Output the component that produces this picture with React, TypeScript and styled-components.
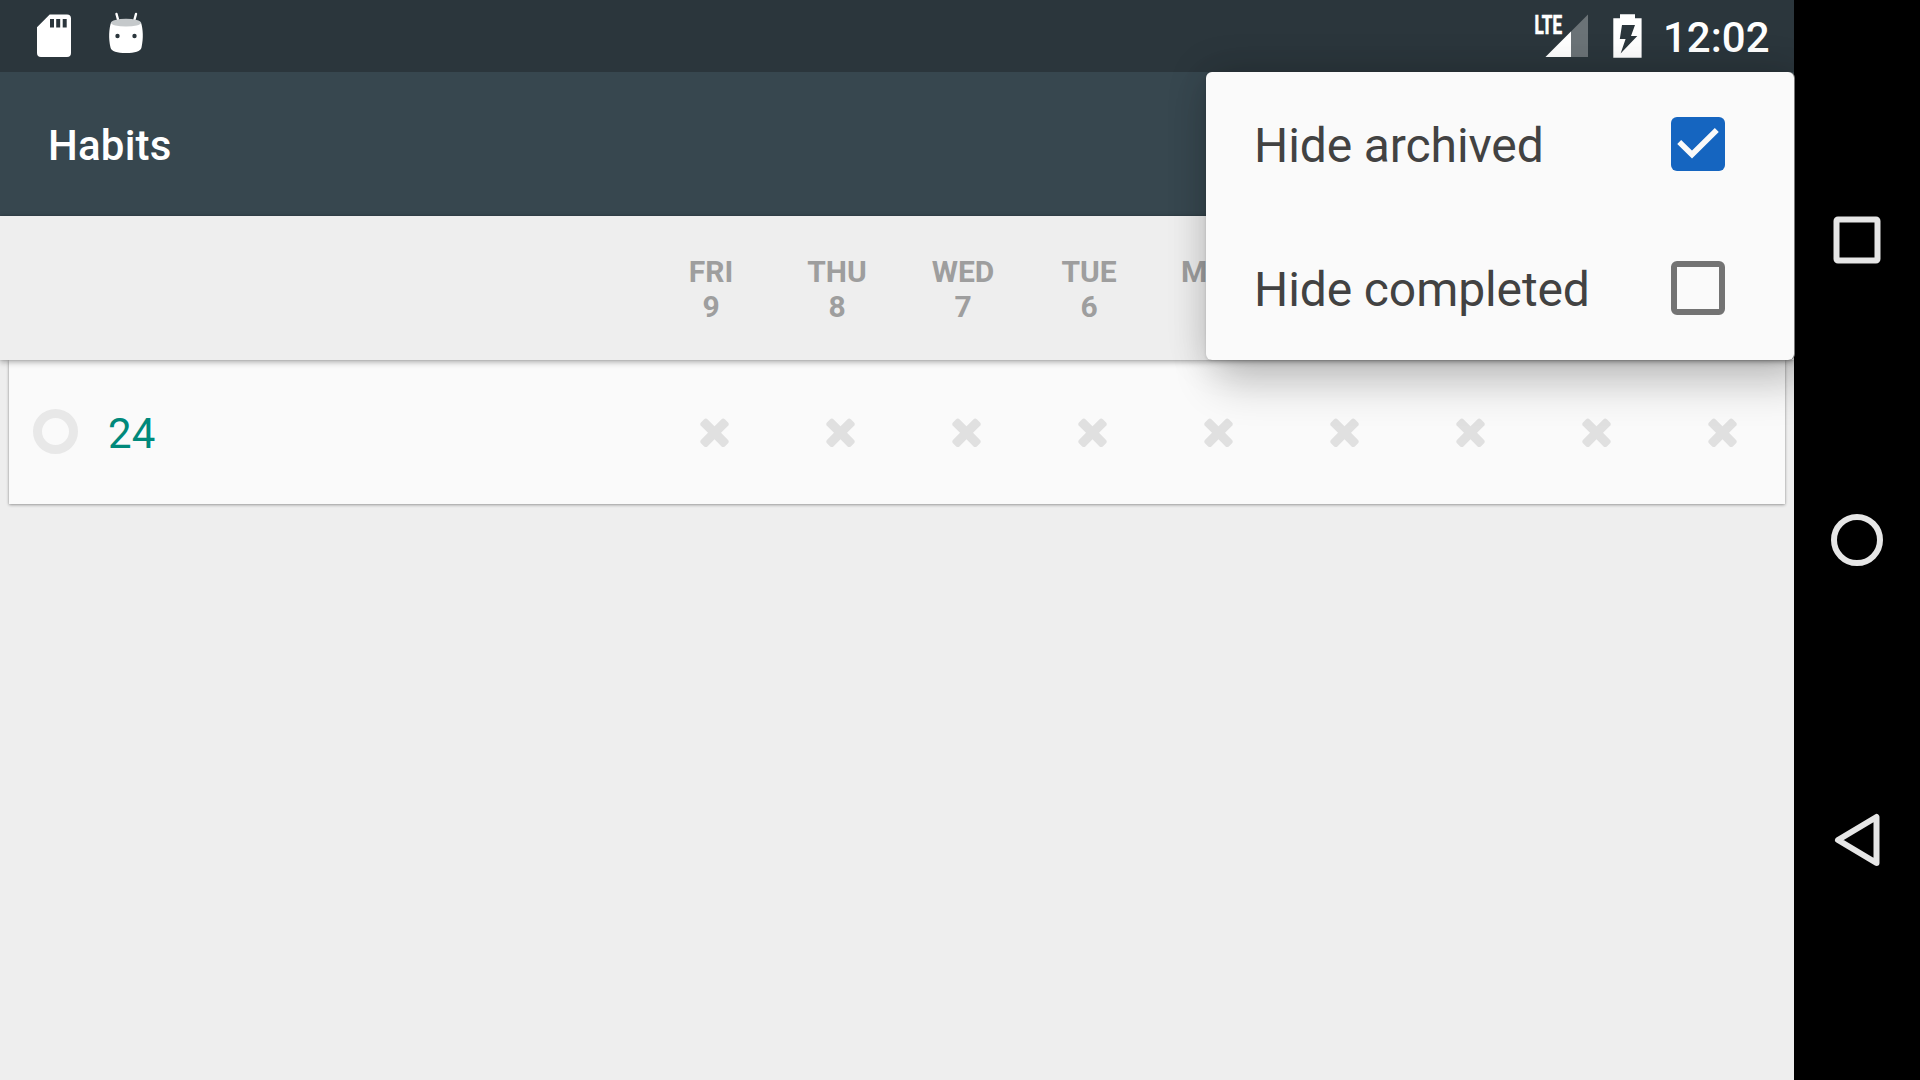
import React, { useState } from "react";
import styled, { createGlobalStyle } from "styled-components";

const GlobalStyle = createGlobalStyle`
  body {
    margin: 0;
    background: #000;
    font-family: Roboto, "Noto Sans", sans-serif;
  }
`;

const Device = styled.div`
  display: flex;
  width: 1920px;
  height: 1080px;
  background: #000;
  overflow: hidden;
`;

const Screen = styled.div`
  position: relative;
  display: flex;
  flex-direction: column;
  width: 1794px;
  height: 1080px;
  background: #eeeeee;
`;

const StatusBar = styled.header`
  display: flex;
  justify-content: space-between;
  height: 72px;
  background: #2b363c;
`;

const StatusGroup = styled.div`
  display: flex;
  align-items: center;
`;

const StatusIcon = styled.svg<{ $w: number }>`
  display: block;
  width: ${(p) => p.$w}px;
  height: 72px;
`;

const Clock = styled.span`
  width: 131px;
  padding-top: 4px;
  font-size: 42px;
  font-weight: 500;
  line-height: 68px;
  color: #fff;
`;

const Toolbar = styled.div`
  display: flex;
  align-items: center;
  height: 144px;
  padding: 0 48px;
  background: #37474f;
`;

const Title = styled.h1`
  margin: 0;
  padding-top: 4px;
  font-size: 42px;
  font-weight: 500;
  line-height: 48px;
  letter-spacing: 0.2px;
  color: #fff;
`;

const DayHeader = styled.div`
  position: relative;
  z-index: 1;
  display: flex;
  justify-content: flex-end;
  align-items: center;
  height: 144px;
  padding: 2px 12px 0 0;
  box-sizing: border-box;
  background: #eeeeee;
  box-shadow: 0 2px 6px rgba(0, 0, 0, 0.32), 0 0 2px rgba(0, 0, 0, 0.15);
`;

const Day = styled.div`
  width: 126px;
  text-align: center;
  font-size: 30px;
  font-weight: 700;
  line-height: 35px;
  color: #9e9e9e;
`;

const HabitCard = styled.div`
  display: flex;
  align-items: center;
  height: 144px;
  margin: 0 9px;
  background: #fafafa;
  box-shadow: 0 1px 3px rgba(0, 0, 0, 0.32), 0 0 2px rgba(0, 0, 0, 0.14);
`;

const ScoreRing = styled.div`
  width: 27px;
  height: 27px;
  margin: 0 30px 1px 24px;
  border: 9px solid #e8e8e8;
  border-radius: 50%;
`;

const HabitName = styled.span`
  flex: 1;
  padding-top: 3px;
  font-size: 42px;
  line-height: 48px;
  letter-spacing: 0.2px;
  color: #00897b;
`;

const Cell = styled.div`
  display: flex;
  justify-content: center;
  width: 126px;
`;

const CrossIcon = styled.svg`
  display: block;
  width: 43px;
  height: 43px;
  fill: #e0e0e0;
`;

const MenuClip = styled.div`
  position: absolute;
  z-index: 2;
  inset: 0 -1px 0 0;
  overflow: hidden;
`;

const Menu = styled.div`
  position: absolute;
  top: 72px;
  right: 1px;
  width: 588px;
  border-radius: 6px;
  background: #fafafa;
  box-shadow: 1px 0 0 #777, 14px 20px 44px 4px rgba(0, 0, 0, 0.2), 0 0 40px rgba(0, 0, 0, 0.15),
    0 1px 3px rgba(0, 0, 0, 0.14);
`;

const MenuItem = styled.div`
  display: flex;
  align-items: center;
  justify-content: space-between;
  height: 144px;
  padding: 0 69px 0 48px;
  cursor: pointer;
`;

const MenuLabel = styled.span`
  padding-top: 3px;
  font-size: 48px;
  line-height: 56px;
  letter-spacing: -0.1px;
  color: #424242;
`;

const Checkbox = styled.span<{ $checked: boolean }>`
  display: block;
  box-sizing: border-box;
  width: 54px;
  height: 54px;
  border: ${(p) => (p.$checked ? 0 : 6)}px solid #737373;
  border-radius: 6px;
  background: ${(p) => (p.$checked ? "#1565c0" : "transparent")};
`;

const NavBar = styled.nav`
  display: flex;
  flex-direction: column;
  justify-content: space-between;
  align-items: center;
  width: 126px;
  height: 1080px;
  padding: 90px 0;
  box-sizing: border-box;
`;

const NavIcon = styled.svg`
  display: block;
  width: 126px;
  height: 300px;
  fill: none;
  stroke: #e6e6e6;
  stroke-width: 6;
  stroke-linejoin: round;
`;

const COLUMN_COUNT = 9;

/* Columns past the fifth sit entirely behind the open menu and carry no label. */
const dayLabels: [string, number][] = [
  ["FRI", 9],
  ["THU", 8],
  ["WED", 7],
  ["TUE", 6],
  ["MON", 5],
];

const columns = Array.from({ length: COLUMN_COUNT }, (_, i) => i);

const Cross = () => (
  <CrossIcon viewBox="0 50 1792 1792">
    <path d="M1490 1322q0 40-28 68l-136 136q-28 28-68 28t-68-28l-294-294-294 294q-28 28-68 28t-68-28l-136-136q-28-28-28-68t28-68l294-294-294-294q-28-28-28-68t28-68l136-136q28-28 68-28t68 28l294 294 294-294q28-28 68-28t68 28l136 136q28 28 28 68t-28 68l-294 294 294 294q28 28 28 68z" />
  </CrossIcon>
);

function FilterItem({ label, initial }: { label: string; initial: boolean }) {
  const [checked, setChecked] = useState(initial);
  return (
    <MenuItem onClick={() => setChecked(!checked)}>
      <MenuLabel>{label}</MenuLabel>
      <Checkbox $checked={checked}>
        {checked && (
          <svg width="54" height="54" viewBox="0 0 54 54" display="block">
            <path d="M8.2 25 L21 37.6 L45.8 12.9" fill="none" stroke="#fafafa" strokeWidth="5.6" />
          </svg>
        )}
      </Checkbox>
    </MenuItem>
  );
}

export default function App() {
  return (
    <>
      <GlobalStyle />
      <Device>
        <Screen>
          <StatusBar>
            <StatusGroup>
              <StatusIcon $w={90} viewBox="0 0 90 72">
                <path
                  fill="#fff"
                  fillRule="evenodd"
                  d="M49.7 14.5H67a4 4 0 0 1 4 4V53a4 4 0 0 1-4 4H41a4 4 0 0 1-4-4V27.2ZM50 19v8.5h4V19ZM56.2 19v8.5h4V19ZM62.7 19v8.5h4V19Z"
                />
              </StatusIcon>
              <StatusIcon $w={72} viewBox="90 0 72 72">
                <path d="M116.5 14l2.2 8M136 14l-2.2 8" stroke="#fff" strokeWidth="2.4" strokeLinecap="round" />
                <path
                  fill="#fff"
                  d="M111 22.5C109 29 108.3 38 110.5 47.5C111.4 51.5 117 53 126 53S140.6 51.5 141.5 47.5C143.7 38 143 29 141 22.5Z"
                />
                <ellipse cx="126" cy="22.7" rx="15" ry="3.9" fill="#c5c9cb" />
                <circle cx="117.5" cy="36" r="2.2" fill="#2b363c" />
                <circle cx="134.5" cy="36" r="2.2" fill="#2b363c" />
              </StatusIcon>
            </StatusGroup>
            <StatusGroup>
              <StatusIcon $w={70} viewBox="1530 0 70 72">
                <path d="M1588 14.5V57H1545.5Z" fill="#6b7377" />
                <path d="M1571 31.5V57H1545.5Z" fill="#fff" />
                <text
                  x="1534.5"
                  y="33.5"
                  fill="#fff"
                  stroke="#fff"
                  strokeWidth="0.7"
                  fontSize="25.5"
                  fontWeight="700"
                  textLength="27.5"
                  lengthAdjust="spacingAndGlyphs"
                >
                  LTE
                </text>
              </StatusIcon>
              <StatusIcon $w={63} viewBox="1600 0 63 72">
                <path
                  fill="#fff"
                  fillRule="evenodd"
                  d="M1620 14.3h15v4h6.6V57.7h-28.3V18.3h6.7ZM1622 25l-2.2 14h5.8l-5 14.5L1637.3 36h-6.3l4-11Z"
                />
              </StatusIcon>
              <Clock>12:02</Clock>
            </StatusGroup>
          </StatusBar>
          <Toolbar>
            <Title>Habits</Title>
          </Toolbar>
          <DayHeader>
            {columns.map((i) => (
              <Day key={i}>
                {dayLabels[i] && (
                  <>
                    {dayLabels[i][0]}
                    <br />
                    {dayLabels[i][1]}
                  </>
                )}
              </Day>
            ))}
          </DayHeader>
          <HabitCard>
            <ScoreRing />
            <HabitName>24</HabitName>
            {columns.map((i) => (
              <Cell key={i}>
                <Cross />
              </Cell>
            ))}
          </HabitCard>
          <MenuClip>
            <Menu>
              <FilterItem label="Hide archived" initial={true} />
              <FilterItem label="Hide completed" initial={false} />
            </Menu>
          </MenuClip>
        </Screen>
        <NavBar>
          <NavIcon viewBox="1794 90 126 300">
            <rect x="1836.5" y="219.5" width="41" height="41" rx="1.5" />
          </NavIcon>
          <NavIcon viewBox="1794 390 126 300">
            <circle cx="1857" cy="540" r="23" />
          </NavIcon>
          <NavIcon viewBox="1794 690 126 300">
            <path d="M1876.5 817v46L1838 840Z" />
          </NavIcon>
        </NavBar>
      </Device>
    </>
  );
}
